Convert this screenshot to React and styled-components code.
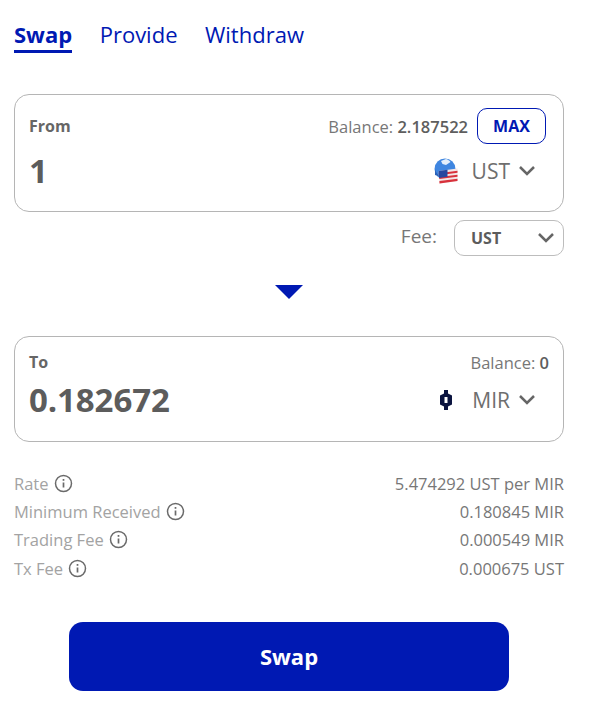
import React from "react";
import styled, { createGlobalStyle } from "styled-components";

const GlobalStyle = createGlobalStyle`
  html, body {
    margin: 0;
    padding: 0;
    background: #fff;
    font-family: "Open Sans", "Noto Sans", sans-serif;
  }
  * {
    box-sizing: border-box;
  }
`;

const Page = styled.div`
  width: 598px;
  height: 714px;
  padding: 19px 34px 0 14px;
  overflow: hidden;
`;

const Tabs = styled.div`
  display: flex;
  gap: 27.5px;
  height: 34px;
`;

const Tab = styled.div`
  height: 34px;
  font-size: 22px;
  line-height: 31px;
  font-weight: ${(p) => (p.$active ? 700 : 400)};
  color: #0019b3;
  border-bottom: ${(p) => (p.$active ? "3px solid #0019b3" : "none")};
`;

const Card = styled.div`
  height: ${(p) => p.$height}px;
  margin-top: ${(p) => p.$top}px;
  border: 1px solid #b5b5b5;
  border-radius: 15px;
  padding: ${(p) => p.$pad};
  display: flex;
  flex-direction: column;
`;

const CardTop = styled.div`
  display: flex;
  justify-content: space-between;
  align-items: center;
  height: ${(p) => p.$height}px;
`;

const Label = styled.span`
  font-size: 16px;
  font-weight: 700;
  color: #666;
`;

const BalanceGroup = styled.div`
  display: flex;
  align-items: center;
  gap: 9px;
`;

const Balance = styled.span`
  font-size: 16.5px;
  color: #777;
  b {
    font-weight: 600;
    color: #5e5e5e;
  }
`;

const MaxButton = styled.button`
  width: 69px;
  height: 36px;
  border: 1px solid #0019b3;
  border-radius: 10px;
  background: #fff;
  color: #0019b3;
  font-family: inherit;
  font-size: 16px;
  font-weight: 700;
  padding: 0;
`;

const CardBottom = styled.div`
  display: flex;
  justify-content: space-between;
  align-items: center;
  margin-top: ${(p) => p.$top}px;
`;

const Amount = styled.span`
  font-size: 33px;
  line-height: 44px;
  font-weight: 700;
  letter-spacing: -0.1px;
  color: #5c5c5c;
`;

const TokenPicker = styled.div`
  display: flex;
  align-items: center;
  font-size: 21px;
  color: #6e6e6e;
  margin-right: ${(p) => p.$right}px;
  svg {
    display: block;
  }
`;

const LogoSlot = styled.div`
  width: 24px;
  display: flex;
  justify-content: center;
`;

const TokenName = styled.span`
  margin: 0 8px 0 14px;
`;

const FeeRow = styled.div`
  display: flex;
  justify-content: flex-end;
  align-items: center;
  gap: 17px;
  margin-top: 8px;
`;

const FeeLabel = styled.span`
  font-size: 19px;
  line-height: 30px;
  color: #777;
  margin-bottom: 5px;
`;

const FeeSelect = styled.div`
  width: 110px;
  height: 36px;
  border: 1px solid #bdbdbd;
  border-radius: 10px;
  padding: 0 8px 0 16px;
  display: flex;
  justify-content: space-between;
  align-items: center;
  font-size: 16px;
  font-weight: 700;
  color: #5c5c5c;
`;

const ArrowRow = styled.div`
  display: flex;
  justify-content: center;
  margin-top: 29px;
`;

const Arrow = styled.div`
  width: 0;
  height: 0;
  border-left: 14px solid transparent;
  border-right: 14px solid transparent;
  border-top: 14px solid #0019b3;
`;

const Details = styled.div`
  margin-top: 27px;
  display: flex;
  flex-direction: column;
`;

const DetailRow = styled.div`
  display: flex;
  justify-content: space-between;
  align-items: center;
  height: 28.4px;
  font-size: 16.5px;
`;

const DetailName = styled.span`
  display: flex;
  align-items: center;
  gap: 5px;
  color: #a3a3a3;
  svg {
    color: #6a6a6a;
  }
`;

const DetailValue = styled.span`
  color: #777;
`;

const SwapButton = styled.button`
  display: block;
  width: 440px;
  height: 69px;
  margin: 39px 0 0 55px;
  border: none;
  border-radius: 14px;
  background: #0019b3;
  color: #fff;
  font-family: inherit;
  font-size: 22px;
  font-weight: 700;
`;

const Chevron = () => (
  <svg width="18" height="18" viewBox="0 0 18 18" fill="none">
    <path d="M2 5 9 12l7-7" stroke="#666" strokeWidth="2.5" />
  </svg>
);

const InfoIcon = () => (
  <svg width="19" height="19" viewBox="0 0 19 19" fill="none" stroke="currentColor">
    <circle cx="9.5" cy="9.5" r="8" strokeWidth="1.5" />
    <path d="M9.5 8.5v5" strokeWidth="1.7" />
    <path d="M9.5 5v1.8" strokeWidth="1.7" />
  </svg>
);

const UstLogo = () => (
  <svg width="24" height="26" viewBox="0 0 24 26">
    <circle cx="11" cy="11" r="10.5" fill="#3f86e0" />
    <path d="M7 3 12 1c2 .5 3.500 1.500 4.500 3L12 7 8.500 6z" fill="#e4effb" />
    <path d="M1 11c1 4 3 6 6 8l-6-2z" fill="#2b62b8" />
    <path d="M4.500 13 23.500 10.500V23L5.500 25.500z" fill="#f3e6e6" />
    <path d="M4.800 15.300 23.500 12.800v2L5 17.300zM5.100 19 23.500 16.700v2L5.300 21zM5.400 23 23.500 20.800V23L5.500 25.500z" fill="#d8323c" />
    <path d="M4.500 13 13.500 11.800v7L5 20z" fill="#27479f" />
  </svg>
);

const MirLogo = () => (
  <svg width="14" height="20" viewBox="0 0 14 20">
    <path d="M5 0h4v3.500l4 2v9l-4 2V20H5v-3.500l-4-2v-9l4-2z" fill="#0b1440" />
    <path d="M5.500 7h3v6h-3z" fill="#fff" />
  </svg>
);

const details = [
  { name: "Rate", value: "5.474292 UST per MIR" },
  { name: "Minimum Received", value: "0.180845 MIR" },
  { name: "Trading Fee", value: "0.000549 MIR" },
  { name: "Tx Fee", value: "0.000675 UST" },
];

const App = () => {
  return (
    <Page>
      <GlobalStyle />
      <Tabs>
        <Tab $active>Swap</Tab>
        <Tab>Provide</Tab>
        <Tab>Withdraw</Tab>
      </Tabs>
      <Card $height={118} $top={41} $pad="13px 17px 0 14px">
        <CardTop $height={36}>
          <Label>From</Label>
          <BalanceGroup>
            <Balance>
              Balance: <b>2.187522</b>
            </Balance>
            <MaxButton>MAX</MaxButton>
          </BalanceGroup>
        </CardTop>
        <CardBottom $top={5}>
          <Amount>1</Amount>
          <TokenPicker $right={10}>
            <LogoSlot>
              <UstLogo />
            </LogoSlot>
            <TokenName>UST</TokenName>
            <Chevron />
          </TokenPicker>
        </CardBottom>
      </Card>
      <FeeRow>
        <FeeLabel>Fee:</FeeLabel>
        <FeeSelect>
          UST
          <Chevron />
        </FeeSelect>
      </FeeRow>
      <ArrowRow>
        <Arrow />
      </ArrowRow>
      <Card $height={106} $top={37} $pad="13px 14px 0 14px">
        <CardTop $height={24}>
          <Label>To</Label>
          <Balance>
            Balance: <b>0</b>
          </Balance>
        </CardTop>
        <CardBottom $top={4}>
          <Amount>0.182672</Amount>
          <TokenPicker $right={13}>
            <LogoSlot>
              <MirLogo />
            </LogoSlot>
            <TokenName>MIR</TokenName>
            <Chevron />
          </TokenPicker>
        </CardBottom>
      </Card>
      <Details>
        {details.map((d) => (
          <DetailRow key={d.name}>
            <DetailName>
              {d.name}
              <InfoIcon />
            </DetailName>
            <DetailValue>{d.value}</DetailValue>
          </DetailRow>
        ))}
      </Details>
      <SwapButton>Swap</SwapButton>
    </Page>
  );
};

export default App;
